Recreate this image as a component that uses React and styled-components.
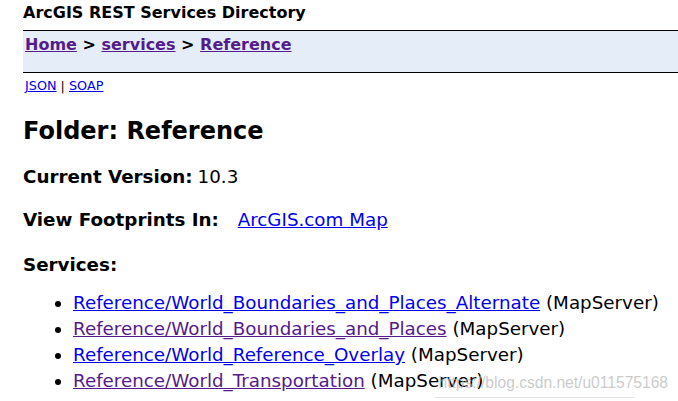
import React from "react";
import styled, { createGlobalStyle } from "styled-components";

const Global = createGlobalStyle`
  html, body { margin: 0; padding: 0; background: #fff; }
  body { font-family: Verdana, "DejaVu Sans", sans-serif; color: #000; overflow: hidden; }
`;

const Page = styled.div`
  width: 678px;
  height: 401px;
  position: relative;
  overflow: hidden;
  padding-left: 23px;
  box-sizing: border-box;
`;

const Title = styled.div`
  font-size: 16px;
  font-weight: bold;
  line-height: 20px;
  padding-top: 3px;
  height: 30px;
  box-sizing: border-box;
`;

const Crumbs = styled.div`
  border-top: 1px solid #000;
  border-bottom: 1px solid #000;
  background: #e5eef8;
  height: 43px;
  box-sizing: border-box;
  padding: 3px 0 0 2px;
  font-size: 16px;
  font-weight: bold;
  line-height: 22px;
`;

const Link = styled.a`
  color: ${(p) => (p.$visited ? "#551a8b" : "#0000ee")};
  text-decoration: underline;
`;

const Formats = styled.div`
  font-size: 12.8px;
  line-height: 16px;
  padding: 5px 0 0 2px;
  height: 43px;
  box-sizing: border-box;
`;

const Heading = styled.h2`
  margin: 0;
  font-size: 24px;
  font-weight: bold;
  line-height: 30px;
  height: 50px;
`;

const Field = styled.div`
  font-size: 18.3px;
  line-height: 22px;
  height: ${(p) => p.$h || 43}px;
`;

const Label = styled.b`
  margin-right: ${(p) => p.$gap || 5}px;
`;

const List = styled.ul`
  margin: 0;
  padding: 0 0 0 50px;
  font-size: 18.3px;
  line-height: 26px;
  list-style: disc;
`;

const Watermark = styled.div`
  position: absolute;
  right: 10px;
  bottom: 9px;
  font-family: "Liberation Sans", Arial, sans-serif;
  font-size: 15.6px;
  color: rgba(185, 185, 185, 0.75);
  pointer-events: none;
`;

const Rule = styled.div`
  position: absolute;
  left: 435px;
  width: 200px;
  bottom: 3px;
  height: 1px;
  background: #e4e4e4;
`;

const services = [
  ["Reference/World_Boundaries_and_Places_Alternate", false],
  ["Reference/World_Boundaries_and_Places", true],
  ["Reference/World_Reference_Overlay", false],
  ["Reference/World_Transportation", true],
];

export default function App() {
  return (
    <>
      <Global />
      <Page>
        <Title>ArcGIS REST Services Directory</Title>
        <Crumbs>
          <Link $visited href="#">Home</Link> &gt; <Link $visited href="#">services</Link> &gt;{" "}
          <Link $visited href="#">Reference</Link>
        </Crumbs>
        <Formats>
          <Link href="#">JSON</Link> | <Link href="#">SOAP</Link>
        </Formats>
        <Heading>Folder: Reference</Heading>
        <Field>
          <Label>Current Version:</Label>10.3
        </Field>
        <Field $h={45}>
          <Label $gap={13}>View Footprints In:</Label> <Link href="#">ArcGIS.com Map</Link>
        </Field>
        <Field $h={36}>
          <b>Services:</b>
        </Field>
        <List>
          {services.map(([name, visited]) => (
            <li key={name}>
              <Link $visited={visited} href="#">{name}</Link> (MapServer)
            </li>
          ))}
        </List>
        <Rule />
        <Watermark>https://blog.csdn.net/u011575168</Watermark>
      </Page>
    </>
  );
}
